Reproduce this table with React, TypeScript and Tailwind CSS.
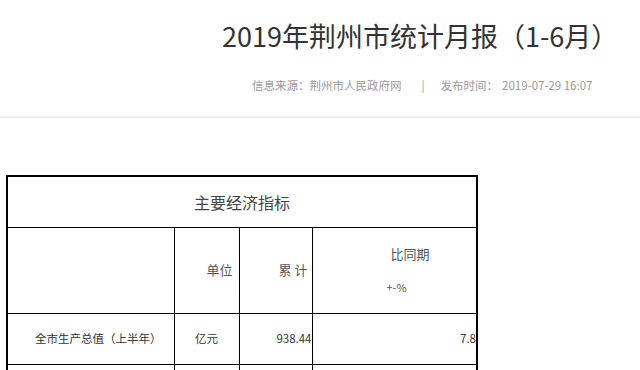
export default function App() {
  return (
    <div className="w-[640px] h-[370px] overflow-hidden bg-white font-['Noto_Sans_CJK_SC',sans-serif]">
      {/* Header */}
      <div className="border-b-2 border-[#f0f0f0] h-[118px]">
        <h1 className="pl-[222px] pt-[15px] text-[27px] leading-[42px] text-[#333] font-normal whitespace-nowrap">
          2019年荆州市统计月报（1-6月）
        </h1>
        <div className="pl-[252px] mt-[19px] text-[11.5px] leading-[18px] text-[#999] whitespace-nowrap flex">
          <span>信息来源：荆州市人民政府网</span>
          <span className="ml-[20px] mr-[16px]">|</span>
          <span>发布时间：</span>
          <span className="ml-[4px]">2019-07-29 16:07</span>
        </div>
      </div>

      {/* Table */}
      <div className="pl-[6px] pt-[57px]">
        <table className="border-collapse border-2 border-black text-[#333]">
          <tbody>
            <tr className="h-[51px]">
              <td colSpan={4} className="border border-black text-center text-[16px] text-[#444]">
                主要经济指标
              </td>
            </tr>
            <tr className="h-[86px]">
              <td className="w-[167px] border border-black" />
              <td className="w-[65px] border border-black text-right pr-[6px] text-[13px] text-[#555]">
                单位
              </td>
              <td className="w-[73px] border border-black text-right pr-[4px] text-[13px] text-[#555]">
                累 计
              </td>
              <td className="w-[165px] border border-black text-[13px] text-[#555] align-top pt-[16px]">
                <div className="pl-[78px]">比同期</div>
                <div className="pl-[74px] mt-[16px] text-[11px]">+-%</div>
              </td>
            </tr>
            <tr className="h-[51px] text-[11.5px]">
              <td className="border border-black pl-[27px]">全市生产总值（上半年）</td>
              <td className="border border-black text-center">亿元</td>
              <td className="border border-black text-right">938.44</td>
              <td className="border border-black text-right">7.8</td>
            </tr>
            <tr className="h-[51px] text-[12px]">
              <td className="border border-black" />
              <td className="border border-black" />
              <td className="border border-black" />
              <td className="border border-black" />
            </tr>
          </tbody>
        </table>
      </div>
    </div>
  );
}
